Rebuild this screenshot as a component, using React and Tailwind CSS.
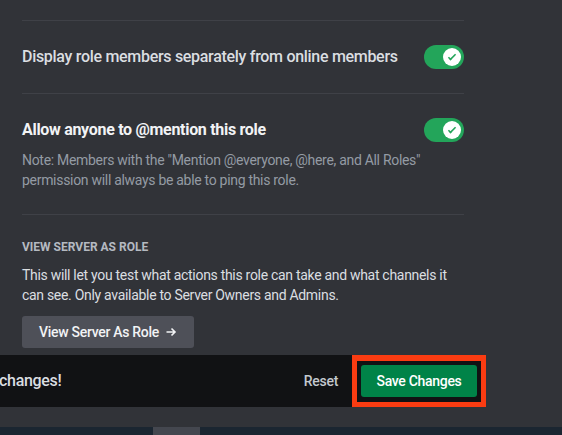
const Toggle = () => (
  <div className="w-10 h-6 rounded-full bg-[#23a55a] flex items-center justify-end pr-[3px] shrink-0">
    <div className="w-[18px] h-[18px] rounded-full bg-white flex items-center justify-center">
      <svg viewBox="0 0 20 20" className="w-[14px] h-[14px]" fill="#23a55a">
        <path d="M7.9 14.85L6.3 13.26L14.31 5.26L15.9 6.85L7.9 14.85Z" />
        <path d="M4.09 11.09L5.68 9.5L9.45 13.27L7.86 14.86L4.09 11.09Z" />
      </svg>
    </div>
  </div>
);

export default function App() {
  return (
    <div
      className="w-[562px] h-[435px] bg-[#313338] overflow-hidden flex flex-col tracking-[-0.3px]"
      style={{ fontFamily: 'Roboto, "Noto Sans", sans-serif' }}
    >
      <div className="pl-[22px] pt-5 w-[464px]">
        <div className="h-px bg-[#3f4147]" />

        {/* separate display */}
        <div className="flex items-center justify-between py-6">
          <span className="text-[16px] leading-6 font-medium text-[#dbdee1]">
            Display role members separately from online members
          </span>
          <Toggle />
        </div>
        <div className="h-px bg-[#3f4147]" />

        {/* mention */}
        <div className="pt-6 pb-6">
          <div className="flex items-center justify-between">
            <span className="text-[16px] leading-6 font-bold text-[#f2f3f5]">
              Allow anyone to @mention this role
            </span>
            <Toggle />
          </div>
          <p className="mt-2 text-[14px] leading-5 text-[#949ba4] w-[420px]">
            Note: Members with the "Mention @everyone, @here, and All Roles"
            permission will always be able to ping this role.
          </p>
        </div>
        <div className="h-px bg-[#3f4147]" />

        {/* view as role */}
        <div className="pt-6">
          <h3 className="text-[12px] leading-4 font-bold uppercase text-[#b5bac1] tracking-normal">
            View server as role
          </h3>
          <p className="mt-[10px] text-[14px] leading-5 text-[#dbdee1] w-[442px]">
            This will let you test what actions this role can take and what channels it
            can see. Only available to Server Owners and Admins.
          </p>
          <button className="mt-[11px] h-8 w-[172px] rounded-[3px] bg-[#4e5058] text-[14px] font-medium text-[#f2f3f5] flex items-center justify-center gap-[6px]">
            View Server As Role
            <svg viewBox="0 0 12 12" className="w-3 h-3" fill="none" stroke="#f2f3f5" strokeWidth="1.6">
              <path d="M1.5 6h8.5M6.5 2.5L10 6l-3.5 3.5" />
            </svg>
          </button>
        </div>
      </div>

      {/* unsaved changes bar */}
      <div className="mt-[7px] flex h-[52px] w-[486px]">
        <div className="flex-1 bg-[#111214] flex items-center justify-between pr-[14px]">
          <span className="text-[16px] font-medium text-[#dbdee1] -ml-px">changes!</span>
          <button className="text-[14px] font-medium text-[#c4c9ce]">Reset</button>
        </div>
        <div className="w-[134px] h-[52px] bg-[#fa3c12] pl-[5px] pr-[5px] pt-[6px] pb-[5px]">
          <div className="bg-[#111214] h-full p-1">
            <button className="w-full h-8 rounded-[3px] bg-[#008348] text-[14px] font-medium text-white">
              Save Changes
            </button>
          </div>
        </div>
      </div>

      <div className="h-5" />
      <div className="flex-1 bg-[#1b2631] flex">
        <div className="ml-[153px] w-[47px] bg-[#44474f]" />
      </div>
    </div>
  );
}
